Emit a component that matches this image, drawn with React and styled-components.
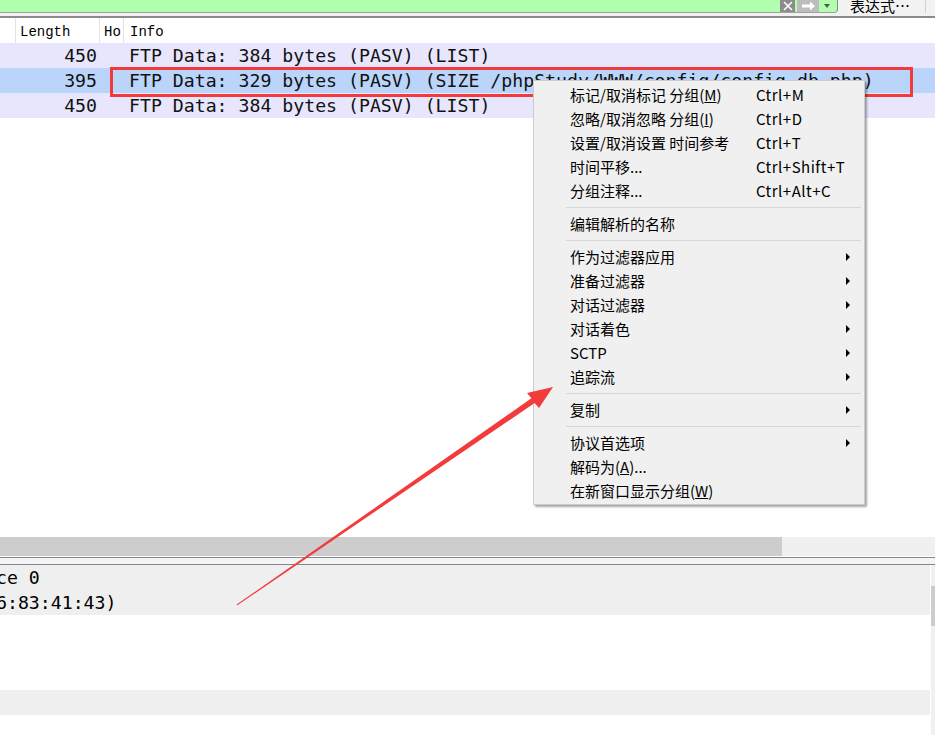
import React from "react";
import styled, { createGlobalStyle } from "styled-components";

const GlobalStyle = createGlobalStyle`
  html, body {
    margin: 0;
    padding: 0;
    background: #fff;
    overflow: hidden;
  }
  body {
    font-family: "Noto Sans CJK SC", "Liberation Sans", sans-serif;
  }
`;

const mono = `"DejaVu Sans Mono", "Liberation Mono", monospace`;

const packets = [
  { len: 450, info: "FTP Data: 384 bytes (PASV) (LIST)" },
  { len: 395, info: "FTP Data: 329 bytes (PASV) (SIZE /phpStudy/WWW/config/config_db.php)", selected: true },
  { len: 450, info: "FTP Data: 384 bytes (PASV) (LIST)" },
];

const menuItems = [
  { label: <>标记/取消标记 分组(<u>M</u>)</>, keys: "Ctrl+M" },
  { label: <>忽略/取消忽略 分组(<u>I</u>)</>, keys: "Ctrl+D" },
  { label: "设置/取消设置 时间参考", keys: "Ctrl+T" },
  { label: "时间平移...", keys: "Ctrl+Shift+T" },
  { label: "分组注释...", keys: "Ctrl+Alt+C" },
  "sep",
  { label: "编辑解析的名称" },
  "sep",
  { label: "作为过滤器应用", sub: true },
  { label: "准备过滤器", sub: true },
  { label: "对话过滤器", sub: true },
  { label: "对话着色", sub: true },
  { label: "SCTP", sub: true },
  { label: "追踪流", sub: true },
  "sep",
  { label: "复制", sub: true },
  "sep",
  { label: "协议首选项", sub: true },
  { label: <>解码为(<u>A</u>)...</> },
  { label: <>在新窗口显示分组(<u>W</u>)</> },
];

const detailRows = [
  { text: "ce 0", shade: true },
  { text: "6:83:41:43)", shade: true },
  { text: "" },
  { text: "" },
  { text: "" },
  { text: "", shade: true },
  { text: "" },
];

function App() {
  return (
    <>
      <GlobalStyle />
      <Page>
        <Toolbar>
          <FilterField>
            <ClearBtn>
              <svg width="10" height="10" viewBox="0 0 10 10">
                <path d="M1 1L9 9M9 1L1 9" stroke="#fff" strokeWidth="1.6" />
              </svg>
            </ClearBtn>
            <ApplyBtn>
              <svg width="15" height="10" viewBox="0 0 15 10">
                <path d="M1 3.5H9V0.5L14 5L9 9.5V6.5H1Z" fill="#fff" />
              </svg>
            </ApplyBtn>
            <DropBtn>
              <svg width="6" height="4" viewBox="0 0 6 4">
                <path d="M0 0H6L3 4Z" fill="#555" />
              </svg>
            </DropBtn>
          </FilterField>
          <ExprButton>表达式…</ExprButton>
          <ToolSep />
        </Toolbar>

        <PacketList>
          <HeaderRow>
            <HeadCell />
            <HeadCell>Length</HeadCell>
            <HeadCell>Ho</HeadCell>
            <HeadCell $last>Info</HeadCell>
          </HeaderRow>
          {packets.map((p, i) => (
            <PacketRow key={i} $selected={p.selected}>
              <span />
              <LenCell>{p.len}</LenCell>
              <span />
              <InfoCell>{p.info}</InfoCell>
            </PacketRow>
          ))}
        </PacketList>

        <HScroll>
          <HThumb />
        </HScroll>
        <Splitter />

        <DetailPane>
          <DetailRows>
            {detailRows.map((r, i) => (
              <DetailRow key={i} $shade={r.shade}>
                {r.text}
              </DetailRow>
            ))}
          </DetailRows>
          <VScroll>
            <VThumb />
          </VScroll>
        </DetailPane>

        <RedBox />

        <Menu>
          {menuItems.map((m, i) =>
            m === "sep" ? (
              <MenuSep key={i} />
            ) : (
              <MenuItem key={i}>
                <span>{m.label}</span>
                <Keys>{m.keys}</Keys>
                {m.sub ? <SubArrow /> : <span />}
              </MenuItem>
            )
          )}
        </Menu>

        <Annotation width="935" height="735" viewBox="0 0 935 735">
          <polygon
            points="236.6,604.6 531.4,398.3 527,393 553,387 539,408 534.6,403.1 237.4,605.2"
            fill="#f33b3b"
          />
        </Annotation>
      </Page>
    </>
  );
}

const Page = styled.div`
  position: relative;
  width: 935px;
  height: 735px;
  display: flex;
  flex-direction: column;
  overflow: hidden;
  background: #fff;
`;

const Toolbar = styled.div`
  flex: 0 0 16px;
  display: flex;
  align-items: flex-start;
  background: #f2f2f2;
  border-bottom: 2px solid #8a8a8a;
`;

const FilterField = styled.div`
  box-sizing: border-box;
  width: 838px;
  height: 13px;
  display: flex;
  justify-content: flex-end;
  align-items: flex-start;
  gap: 2px;
  padding-right: 4px;
  background: #afffaf;
  border-right: 1px solid #8a8a8a;
  border-bottom: 1px solid #a0a0a0;
  border-bottom-right-radius: 4px;
`;

const ClearBtn = styled.div`
  width: 15px;
  height: 12px;
  display: flex;
  align-items: center;
  justify-content: center;
  background: #8c8c8c;
`;

const ApplyBtn = styled.div`
  width: 22px;
  height: 12px;
  display: flex;
  align-items: center;
  justify-content: center;
  background: #bdbdbd;
`;

const DropBtn = styled.div`
  width: 12px;
  height: 12px;
  display: flex;
  align-items: center;
  justify-content: center;
`;

const ExprButton = styled.div`
  margin-left: 12px;
  height: 14px;
  font-size: 15px;
  line-height: 11px;
  color: #000;
  overflow: hidden;
`;

const ToolSep = styled.div`
  margin-left: auto;
  margin-right: 9px;
  width: 1px;
  height: 13px;
  background: #d0d0d0;
`;

const PacketList = styled.div`
  flex: 0 0 519px;
  background: #fff;
`;

const HeaderRow = styled.div`
  display: grid;
  grid-template-columns: 16px 84px 24px 1fr;
  height: 25px;
  font-family: "Liberation Mono", monospace;
  font-size: 14px;
  line-height: 29px;
  color: #000;
  background: #fff;
`;

const HeadCell = styled.div`
  padding-left: ${(p) => (p.$last ? "6px" : "4px")};
  border-right: ${(p) => (p.$last ? "none" : "1px solid #e3e3e3")};
  white-space: nowrap;
  overflow: hidden;
`;

const PacketRow = styled.div`
  display: grid;
  grid-template-columns: 16px 84px 24px 1fr;
  height: 25px;
  font-family: ${mono};
  font-size: 18.2px;
  line-height: 25px;
  color: #111;
  background: ${(p) => (p.$selected ? "#bad5f9" : "#e7e6fc")};
  white-space: nowrap;
`;

const LenCell = styled.span`
  text-align: right;
  padding-right: 3px;
`;

const InfoCell = styled.span`
  padding-left: 5px;
  overflow: hidden;
`;

const HScroll = styled.div`
  flex: 0 0 19px;
  display: flex;
  background: #f0f0f0;
`;

const HThumb = styled.div`
  width: 782px;
  background: #cdcdcd;
`;

const Splitter = styled.div`
  box-sizing: border-box;
  flex: 0 0 8px;
  margin-top: 1px;
  background: #f4f4f4;
  border-top: 1px solid #858594;
  border-bottom: 1px solid #858594;
`;

const DetailPane = styled.div`
  flex: 1;
  display: flex;
  min-height: 0;
`;

const DetailRows = styled.div`
  flex: 1;
  overflow: hidden;
`;

const DetailRow = styled.div`
  height: 25px;
  text-indent: -4px;
  font-family: ${mono};
  font-size: 18.2px;
  line-height: 25px;
  color: #000;
  white-space: nowrap;
  background: ${(p) => (p.$shade ? "#efefef" : "#fff")};
`;

const VScroll = styled.div`
  flex: 0 0 4px;
  border-left: 1px solid #fff;
  background: #f0f0f0;
`;

const VThumb = styled.div`
  margin-top: 21px;
  height: 40px;
  background: #cdcdcd;
`;

const RedBox = styled.div`
  position: absolute;
  left: 110px;
  top: 67px;
  width: 803px;
  height: 30px;
  box-sizing: border-box;
  border: 3px solid #f23a3a;
`;

const Menu = styled.div`
  position: absolute;
  left: 533px;
  top: 80px;
  width: 332px;
  height: 425px;
  box-sizing: border-box;
  padding-top: 2px;
  background: #f0f0f0;
  border: 1px solid #cbcbcb;
  box-shadow: 2px 2px 2px rgba(0, 0, 0, 0.35);
`;

const MenuItem = styled.div`
  display: grid;
  grid-template-columns: 186px 1fr 6px;
  align-items: center;
  height: 24px;
  padding: 0 14px 0 36px;
  font-family: "Noto Sans CJK SC", "Liberation Sans", sans-serif;
  font-size: 15px;
  line-height: 24px;
  color: #000;
  white-space: nowrap;
`;

const Keys = styled.span`
  letter-spacing: 0.5px;
`;

const SubArrow = styled.span`
  justify-self: end;
  width: 0;
  height: 0;
  border-left: 4px solid #000;
  border-top: 4px solid transparent;
  border-bottom: 4px solid transparent;
`;

const MenuSep = styled.div`
  height: 9px;
  padding-top: 4px;
  box-sizing: border-box;
  margin: 0 3px 0 32px;

  &::after {
    content: "";
    display: block;
    height: 1px;
    background: #d7d7d7;
  }
`;

const Annotation = styled.svg`
  position: absolute;
  left: 0;
  top: 0;
  pointer-events: none;
`;

export default App;
